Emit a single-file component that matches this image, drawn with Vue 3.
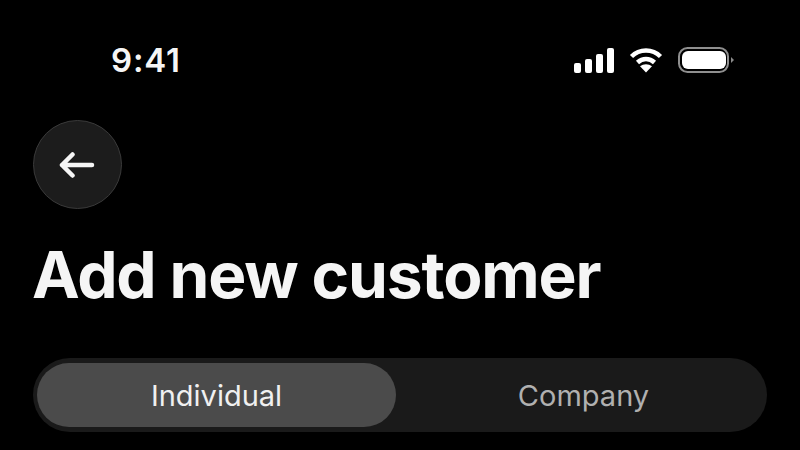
<script setup>
const segments = [
  { label: 'Individual', active: true },
  { label: 'Company', active: false },
]
</script>

<template>
  <div class="screen">
    <header class="status">
      <span class="time">9:41</span>
      <div class="indicators">
        <svg class="signal" width="40" height="26" viewBox="0 0 40 26">
          <rect x="0" y="16" width="7" height="10" rx="2" />
          <rect x="11" y="12" width="7" height="14" rx="2" />
          <rect x="22" y="7" width="7" height="19" rx="2" />
          <rect x="33" y="1" width="7" height="25" rx="2" />
        </svg>
        <svg class="wifi" width="34" height="26" viewBox="0 0 34 26">
          <path d="M2.5 9.5C10.5 1.5 23.5 1.5 31.5 9.5" />
          <path d="M8.5 15.5C13.5 10.8 20.5 10.8 25.5 15.5" />
          <path d="M17 25.5l-6-6.2c3.5-2.8 8.5-2.8 12 0z" class="solid" />
        </svg>
        <svg class="battery" width="56" height="26" viewBox="0 0 56 26">
          <rect x="1" y="1" width="49" height="24" rx="8.5" class="shell" />
          <rect x="4" y="4" width="44" height="18" rx="6" class="fill" />
          <path d="M53 10l3 3-3 3z" class="cap" />
        </svg>
      </div>
    </header>

    <button class="back" aria-label="Back">
      <svg width="36" height="36" viewBox="0 0 36 36">
        <path d="M33 18H3M13.5 7.5L3 18l10.5 10.5" />
      </svg>
    </button>

    <h1 class="title">Add new customer</h1>

    <div class="segmented">
      <div
        v-for="s in segments"
        :key="s.label"
        class="segment"
        :class="{ active: s.active }"
      >
        {{ s.label }}
      </div>
    </div>
  </div>
</template>

<style scoped>
.screen {
  width: 800px;
  height: 450px;
  box-sizing: border-box;
  overflow: hidden;
  background: #000;
  padding: 38px 33px 0 33px;
  font-family: Inter, "Liberation Sans", sans-serif;
  color: #f5f5f5;
}
.status {
  display: flex;
  align-items: center;
  justify-content: space-between;
  height: 44px;
  padding-left: 78px;
  padding-right: 33px;
}
.time {
  font-size: 33px;
  font-weight: 600;
  letter-spacing: 0.8px;
}
.indicators {
  display: flex;
  align-items: center;
  gap: 15px;
}
.indicators svg {
  display: block;
}
.signal rect {
  fill: #fff;
}
.wifi path {
  fill: none;
  stroke: #fff;
  stroke-width: 4.5;
}
.wifi path.solid {
  fill: #fff;
  stroke: none;
}
.battery .shell {
  fill: none;
  stroke: #8f8f8f;
  stroke-width: 2;
}
.battery .fill {
  fill: #fff;
}
.battery .cap {
  fill: #8a8a8a;
}
.back {
  display: flex;
  align-items: center;
  justify-content: center;
  width: 89px;
  height: 89px;
  margin-top: 38px;
  padding: 0;
  border-radius: 50%;
  border: 1.5px solid #3a3a3a;
  background: #1c1c1c;
}
.back svg {
  margin-left: -1px;
}
.back svg path {
  fill: none;
  stroke: #f5f5f5;
  stroke-width: 4.5;
  stroke-linecap: round;
  stroke-linejoin: round;
}
.title {
  margin: 27px 0 0 -1px;
  font-size: 64px;
  line-height: 78px;
  font-weight: 700;
  letter-spacing: -1.15px;
  color: #f5f5f5;
}
.segmented {
  display: flex;
  gap: 8px;
  width: 734px;
  height: 74px;
  margin-top: 44px;
  box-sizing: border-box;
  padding: 5px 4px;
  border-radius: 37px;
  background: #1a1a1a;
}
.segment {
  flex: 1;
  display: flex;
  align-items: center;
  justify-content: center;
  border-radius: 32px;
  font-size: 29px;
  font-weight: 400;
  color: #b0b0b0;
}
.segment.active {
  background: #4b4b4b;
  color: #f0f0f0;
}
</style>
